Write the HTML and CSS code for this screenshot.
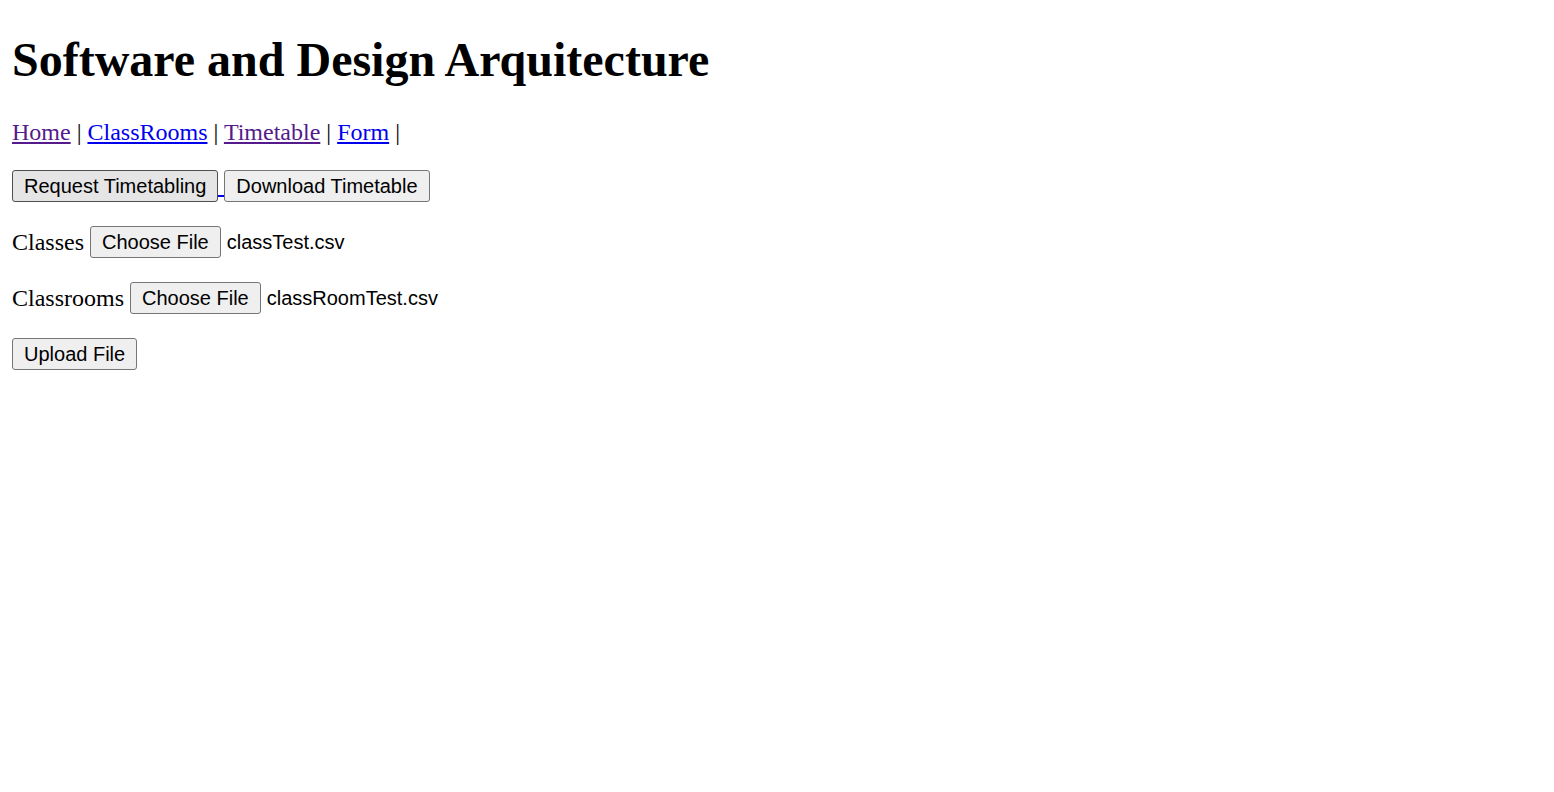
FILE: index.html
```html
<!DOCTYPE html>
<html>
<head>
<meta charset="utf-8">
<title>Software and Design Arquitecture</title>
<link rel="stylesheet" href="styles.css">
</head>
<body>
<h1 class="title">Software and Design Arquitecture</h1>
<p class="nav"><a class="visited" href="#">Home</a> | <a href="#">ClassRooms</a> | <a class="visited" href="#">Timetable</a> | <a href="#">Form</a> |</p>
<div class="row">
  <a class="btn-link" href="#"><button class="btn btn-hover" type="button">Request Timetabling</button><span class="link-gap"></span></a>
  <button class="btn" type="button">Download Timetable</button>
</div>
<div class="row">
  <span class="label">Classes</span>
  <button class="btn" type="button">Choose File</button>
  <span class="filename">classTest.csv</span>
</div>
<div class="row">
  <span class="label">Classrooms</span>
  <button class="btn" type="button">Choose File</button>
  <span class="filename">classRoomTest.csv</span>
</div>
<div class="row">
  <button class="btn" type="button">Upload File</button>
</div>
</body>
</html>
```
FILE: styles.css
```css
html, body {
  background: #ffffff;
}
body {
  margin: 12px;
  font-family: "Liberation Serif", "Times New Roman", serif;
  font-size: 24px;
  color: #000000;
}
.title {
  font-size: 48px;
  font-weight: bold;
  margin: 20px 0 32px;
  line-height: 55px;
}
.nav {
  margin: 24px 0;
  line-height: 27px;
}
.nav a {
  color: #0000ee;
}
.nav a.visited {
  color: #551a8b;
}
.row {
  display: flex;
  align-items: center;
  gap: 6px;
  height: 32px;
  margin: 24px 0;
}
.btn-link {
  display: flex;
  align-items: flex-end;
  text-decoration: none;
}
.link-gap {
  width: 6px;
  height: 0;
  border-bottom: 2px solid #0000ee;
  margin-bottom: 5px;
}
.row .btn-link + .btn {
  margin-left: -6px;
}
.btn {
  box-sizing: border-box;
  height: 32px;
  padding: 0 11px;
  border: 1px solid #767676;
  border-radius: 3px;
  background: #efefef;
  color: #000000;
  font-family: "Liberation Sans", Arial, sans-serif;
  font-size: 20px;
  line-height: 30px;
  margin: 0;
}
.btn-hover {
  background: #e5e5e5;
  border-color: #4f4f4f;
}
.filename {
  font-family: "Liberation Sans", Arial, sans-serif;
  font-size: 20px;
}
```
